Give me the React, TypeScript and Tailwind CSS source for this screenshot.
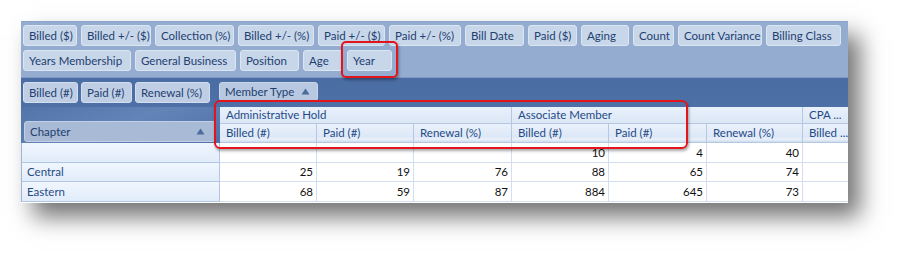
import React from "react";

const row1: [string, number][] = [
  ["Billed ($)", 54],
  ["Billed +/- ($)", 70],
  ["Collection (%)", 79],
  ["Billed +/- (%)", 76],
  ["Paid +/- ($)", 67],
  ["Paid +/- (%)", 72],
  ["Bill Date", 59],
  ["Paid ($)", 49],
  ["Aging", 48],
  ["Count", 41],
  ["Count Variance", 84],
  ["Billing Class", 75],
];
const row2: [string, number][] = [
  ["Years Membership", 108],
  ["General Business", 101],
  ["Position", 59],
  ["Age", 40],
  ["Year", 45],
];
const row3: [string, number][] = [
  ["Billed (#)", 55],
  ["Paid (#)", 51],
  ["Renewal (%)", 75],
];

function Tri({ color }: { color: string }) {
  return (
    <svg width="9" height="7" viewBox="0 0 9 7" className="shrink-0">
      <polygon points="0.5,6.5 4.5,0.5 8.5,6.5" fill={color} />
    </svg>
  );
}

function Chip({ label, w, dark }: { label: string; w: number; dark?: boolean }) {
  return (
    <div
      style={{ width: w }}
      className={
        "h-[21px] shrink-0 flex items-center pl-[5px] rounded-[3px] border text-[#22406f] whitespace-nowrap " +
        (dark ? "bg-[#bfcee5] border-[#d3deee]" : "bg-[#c8d6ea] border-[#dce5f2]")
      }
    >
      {label}
    </div>
  );
}

const sub = ["Billed (#)", "Paid (#)", "Renewal (%)", "Billed (#)", "Paid (#)", "Renewal (%)", "Billed ..."];
const data: (string | number)[][] = [
  ["", "", "", "", 10, 4, 40, ""],
  ["Central", 25, 19, 76, 88, 65, 74, ""],
  ["Eastern", 68, 59, 87, 884, 645, 73, ""],
];

export default function App() {
  return (
    <div className="w-[904px] h-[258px] bg-white pt-[21px] pl-[21px] font-['Lato',sans-serif] text-[11.5px] leading-none">
      <div className="relative w-[827px] h-[182px] shadow-[12px_14px_22px_rgba(0,0,0,0.55)] flex flex-col overflow-visible">
        {/* top filter area */}
        <div className="h-[56px] bg-[#94acd0] border-t border-[#8aa3c8] px-[2px] pt-[3px] flex flex-col gap-[4px]">
          <div className="flex gap-[4px]">
            {row1.map(([l, w]) => (
              <Chip key={l} label={l} w={w} />
            ))}
          </div>
          <div className="flex gap-[4px]">
            {row2.map(([l, w]) => (
              <Chip key={l} label={l} w={w} />
            ))}
          </div>
        </div>
        {/* dark area */}
        <div className="flex-1 bg-[linear-gradient(180deg,#4a6da4_0%,#4f73a9_40%,#5a7db2_100%)] border-t border-[#7f9ac3] flex flex-col">
          <div className="h-[29px] flex px-[2px] pt-[4px] gap-[3px]">
            {row3.map(([l, w]) => (
              <Chip key={l} label={l} w={w} dark />
            ))}
            <div className="ml-[6px] w-[99px] h-[19px] flex items-center gap-[7px] pl-[5px] rounded-[3px] border border-[#c9d6ea] bg-[#b7c8e0] text-[#22406f] whitespace-nowrap">
              Member Type
              <Tri color="#4a6a9c" />
            </div>
          </div>
          <div className="grid grid-cols-[199px_97px_97px_98px_97px_98px_96px_1fr] grid-rows-[17px_19px_20px_19px_20px] flex-1 bg-white">
            {/* chapter header cell */}
            <div className="row-span-2 bg-[linear-gradient(160deg,#5274a9_0%,#6384b7_50%,#4e70a6_100%)] pl-[3px] pr-[4px] pt-[14px]">
              <div className="h-[21px] rounded-[3px] bg-[#a8bad6] border border-[#c2d0e5] flex items-center justify-between pl-[5px] pr-[10px] text-[#22406f]">
                <span>Chapter</span>
                <Tri color="#4d6c9e" />
              </div>
            </div>
            {/* group headers */}
            <div className="col-span-3 bg-[linear-gradient(180deg,#e9f1fb,#dbe7f6)] border-r border-b border-[#b4c8e2] flex items-center pl-[6px] text-[#1f4a86]">
              Administrative Hold
            </div>
            <div className="col-span-3 bg-[linear-gradient(180deg,#e9f1fb,#dbe7f6)] border-r border-b border-[#b4c8e2] flex items-center pl-[6px] text-[#1f4a86]">
              Associate Member
            </div>
            <div className="bg-[linear-gradient(180deg,#e9f1fb,#dbe7f6)] border-b border-[#b4c8e2] flex items-center pl-[6px] text-[#1f4a86] whitespace-nowrap overflow-hidden">
              CPA ...
            </div>
            {/* sub headers */}
            {sub.map((s, i) => (
              <div
                key={i}
                className={
                  "bg-[linear-gradient(180deg,#eaf1fb_0%,#dde8f7_70%,#e9f0fa_85%,#cfdcee_100%)] border-b border-[#b4c8e2] flex items-center pl-[6px] text-[#1f4a86] whitespace-nowrap overflow-hidden " +
                  (i < 6 ? "border-r" : "")
                }
              >
                {s}
              </div>
            ))}
            {/* data rows */}
            {data.map((r, ri) => (
              <React.Fragment key={ri}>
                <div className="bg-[linear-gradient(180deg,#f0f6fe,#e1ecfa)] border-b border-r border-[#b3c7e2] border-l border-l-[#9fb5d6] flex items-center pl-[5px] text-[#1f4a86]">
                  {r[0]}
                </div>
                {r.slice(1).map((v, ci) => (
                  <div
                    key={ci}
                    className={
                      "border-b border-[#d3dfee] flex items-center justify-end pr-[3px] text-[#111] " +
                      (ci < 6 ? "border-r" : "")
                    }
                  >
                    {v}
                  </div>
                ))}
              </React.Fragment>
            ))}
          </div>
        </div>
        {/* highlight boxes */}
        <div className="absolute left-[320px] top-[20px] w-[57px] h-[37px] rounded-[5px] border-2 border-[#e3141b] shadow-[1px_2px_3px_rgba(0,0,0,0.35)]" />
        <div className="absolute left-[193px] top-[79px] w-[474px] h-[49px] rounded-[6px] border-2 border-[#e3141b] shadow-[1px_2px_3px_rgba(0,0,0,0.35)]" />
      </div>
    </div>
  );
}
